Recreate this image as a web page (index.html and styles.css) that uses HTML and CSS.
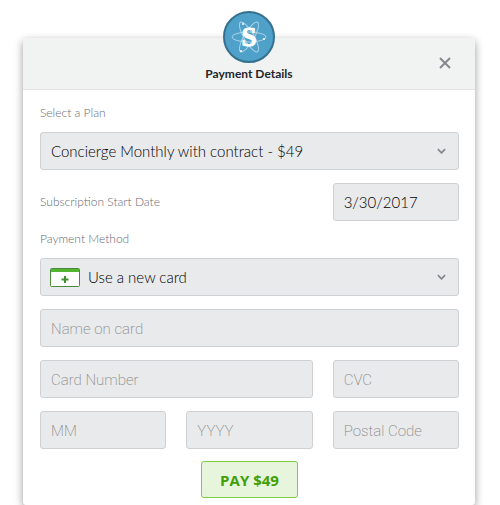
FILE: index.html
```html
<!DOCTYPE html>
<html lang="en">
<head>
    <meta charset="UTF-8">
    <meta name="viewport" content="width=device-width, initial-scale=1.0">
    <title>Payment Details</title>
    <link rel="stylesheet" href="styles.css">
</head>
<body>
    <main class="modal">
        <header class="modal-header">
            <svg class="logo" viewBox="0 0 52 52" aria-hidden="true">
                <circle cx="26" cy="26" r="25" fill="#4fa1ca" stroke="#35718f" stroke-width="2"/>
                <g fill="none" stroke="#a9d3e7" stroke-width="1">
                    <ellipse cx="26" cy="26" rx="17" ry="5"/>
                    <ellipse cx="26" cy="26" rx="17" ry="5" transform="rotate(60 26 26)"/>
                    <ellipse cx="26" cy="26" rx="17" ry="5" transform="rotate(120 26 26)"/>
                </g>
                <g fill="#fff">
                    <circle cx="41" cy="28" r="1"/>
                    <circle cx="20" cy="13" r="1"/>
                    <circle cx="18" cy="40" r="1"/>
                </g>
                <text class="logo-letter" x="26" y="35" text-anchor="middle">S</text>
            </svg>
            <h1 class="modal-title">Payment Details</h1>
            <button class="close" type="button" aria-label="Close">
                <svg viewBox="0 0 12 12" width="12" height="12"><path d="M1 1l10 10M11 1L1 11"/></svg>
            </button>
        </header>

        <form class="payment-form">
            <label class="label" for="plan">Select a Plan</label>
            <div class="select-box">
                <select class="field" id="plan">
                    <option>Concierge Monthly with contract - $49</option>
                </select>
                <svg class="chevron" viewBox="0 0 10 6"><path d="M1 1l4 4 4-4"/></svg>
            </div>

            <div class="row date-row">
                <label class="label wide" for="start-date">Subscription Start Date</label>
                <input class="field" id="start-date" type="text" value="3/30/2017">
            </div>

            <label class="label" for="method">Payment Method</label>
            <div class="select-box">
                <svg class="card-icon" viewBox="0 0 30 19" aria-hidden="true">
                    <rect x="0.5" y="0.5" width="29" height="18" rx="1" fill="#fff" stroke="#4b8b3b"/>
                    <path d="M1 1h28v3H1z" fill="#53b52f"/>
                    <path d="M15 8v7M11.500 11.500h7" stroke="#3f922b" stroke-width="2"/>
                </svg>
                <select class="field with-icon" id="method">
                    <option>Use a new card</option>
                </select>
                <svg class="chevron" viewBox="0 0 10 6"><path d="M1 1l4 4 4-4"/></svg>
            </div>

            <div class="row">
                <input class="field full" type="text" placeholder="Name on card" aria-label="Name on card">
                <input class="field wide" type="text" placeholder="Card Number" aria-label="Card Number">
                <input class="field" type="text" placeholder="CVC" aria-label="CVC">
                <input class="field" type="text" placeholder="MM" aria-label="MM">
                <input class="field" type="text" placeholder="YYYY" aria-label="YYYY">
                <input class="field" type="text" placeholder="Postal Code" aria-label="Postal Code">
            </div>

            <button class="pay" type="submit">PAY $49</button>
        </form>
    </main>
</body>
</html>
```
FILE: styles.css
```css
* {
    box-sizing: border-box;
}
body {
    margin: 0;
    padding: 38px 25px 0 23px;
    background-color: #fff;
    font-family: Lato, "Open Sans", sans-serif;
}
.modal {
    min-height: calc(100vh - 38px);
    background-color: #fff;
    border-radius: 3px;
    box-shadow: 0 3px 8px rgba(0, 0, 0, 0.4);
}
.modal-header {
    position: relative;
    display: flex;
    flex-direction: column;
    align-items: center;
    height: 52px;
    background-color: #f1f3f3;
    border-bottom: 1px solid #e3e5e5;
    border-radius: 3px 3px 0 0;
}
.logo {
    width: 52px;
    height: 52px;
    margin-top: -27px;
    flex-shrink: 0;
}
.logo-letter {
    fill: #fff;
    stroke: #fff;
    font-family: "Liberation Serif", serif;
    font-size: 27px;
    font-weight: bold;
}
.modal-title {
    margin: 3px 0 0;
    color: #23262b;
    font-size: 12px;
    line-height: 16px;
}
.close {
    position: absolute;
    top: 15px;
    right: 20px;
    display: flex;
    padding: 4px;
    border: none;
    background: none;
    cursor: pointer;
}
.close path,
.chevron path {
    fill: none;
    stroke: #85898d;
    stroke-width: 2;
}
.payment-form {
    display: flex;
    flex-direction: column;
    padding: 14px 16px 7px 17px;
}
.label {
    margin-bottom: 10px;
    color: #666c76;
    font-size: 12px;
    font-weight: 300;
    line-height: 18px;
}
.select-box {
    position: relative;
    margin-bottom: 13px;
}
.row {
    display: grid;
    grid-template-columns: repeat(3, 1fr);
    gap: 13px 20px;
    align-items: center;
}
.date-row {
    margin-bottom: 9px;
}
.date-row .label {
    margin-bottom: 0;
}
.wide {
    grid-column: span 2;
}
.full {
    grid-column: span 3;
}
.field {
    display: block;
    width: 100%;
    min-width: 0;
    height: 38px;
    padding: 0 10px;
    appearance: none;
    background-color: #e9eaec;
    border: 1px solid #cdd1d4;
    border-radius: 3px;
    color: #000;
    font-family: inherit;
    font-size: 15px;
    font-weight: 300;
}
.field::placeholder {
    color: #888;
    font-family: Roboto, "Liberation Sans", sans-serif;
    font-weight: 200;
    opacity: 1;
}
.with-icon {
    padding-left: 47px;
}
.chevron {
    position: absolute;
    top: 16px;
    right: 13px;
    width: 9px;
    height: 6px;
    pointer-events: none;
}
.card-icon {
    position: absolute;
    top: 10px;
    left: 10px;
    width: 30px;
    height: 19px;
    pointer-events: none;
}
.pay {
    align-self: center;
    height: 37px;
    margin-top: 12px;
    padding: 0 18px;
    background-color: #e7f5dd;
    border: 1px solid #7dcc43;
    border-radius: 3px;
    color: #42a006;
    font-family: "Open Sans", sans-serif;
    font-size: 15px;
    font-weight: bold;
    cursor: pointer;
}
```
